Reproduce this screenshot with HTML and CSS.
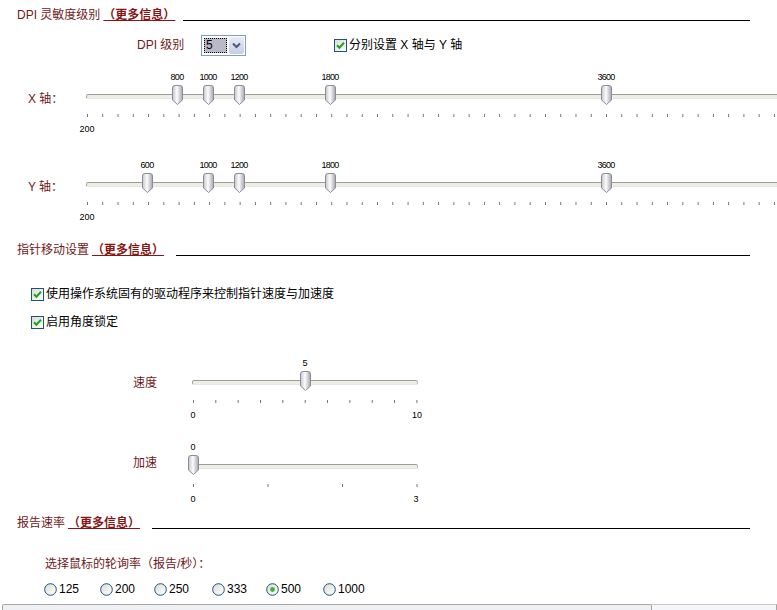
FILE: index.html
```html
<!DOCTYPE html>
<html>
<head>
<meta charset="utf-8">
<title>鼠标设置</title>
<link rel="stylesheet" href="styles.css">
</head>
<body>
<svg class="defs" width="0" height="0" aria-hidden="true">
  <defs>
    <linearGradient id="thumbGrad" x1="0" y1="0" x2="1" y2="0">
      <stop offset="0" stop-color="#c4c4cc"/>
      <stop offset="0.45" stop-color="#fdfdfd"/>
      <stop offset="1" stop-color="#a4a4b0"/>
    </linearGradient>
    <linearGradient id="boxGrad" x1="0" y1="0" x2="1" y2="1">
      <stop offset="0" stop-color="#dcdcd4"/>
      <stop offset="1" stop-color="#ffffff"/>
    </linearGradient>
  </defs>
</svg>
<div class="page">
  <div class="sec-head h-dpi">
    <span class="sec-title">DPI 灵敏度级别</span><span class="more">（更多信息）</span><span class="rule"></span>
  </div>

  <div class="dpi-row">
    <span class="lbl">DPI 级别</span>
    <div class="select">
      <span class="sel-val">5</span>
      <span class="sel-btn"><svg width="9" height="7" viewBox="0 0 9 7"><path d="M1 1.5 L4.5 5 L8 1.5" fill="none" stroke="#4a5a80" stroke-width="2"/></svg></span>
    </div>
    <div class="check dpi-check">
      <svg width="13" height="13" viewBox="0 0 13 13"><rect x="0.5" y="0.5" width="12" height="12" fill="url(#boxGrad)" stroke="#1c5180"/><path d="M3 6.3 L5.4 8.8 L10 3.8" fill="none" stroke="#21a121" stroke-width="2"/></svg>
      <span>分别设置 X 轴与 Y 轴</span>
    </div>
  </div>

  <div class="slider-row axis-row row-x">
    <span class="row-lbl">X 轴：</span>
    <div class="slider wide">
      <span class="val cond" style="left:90px">800</span>
      <span class="val cond" style="left:121px">1000</span>
      <span class="val cond" style="left:152px">1200</span>
      <span class="val cond" style="left:243px">1800</span>
      <span class="val cond" style="left:519px">3600</span>
      <div class="track"></div>
      <span class="thumb" style="left:90px"><svg width="11" height="20" viewBox="0 0 11 20"><path d="M0.5 3 Q0.5 0.5 3 0.5 H8 Q10.5 0.5 10.5 3 V15 L5.5 19.5 L0.5 15 Z" fill="url(#thumbGrad)" stroke="#8c8c96"/></svg></span>
      <span class="thumb" style="left:121px"><svg width="11" height="20" viewBox="0 0 11 20"><path d="M0.5 3 Q0.5 0.5 3 0.5 H8 Q10.5 0.5 10.5 3 V15 L5.5 19.5 L0.5 15 Z" fill="url(#thumbGrad)" stroke="#8c8c96"/></svg></span>
      <span class="thumb" style="left:152px"><svg width="11" height="20" viewBox="0 0 11 20"><path d="M0.5 3 Q0.5 0.5 3 0.5 H8 Q10.5 0.5 10.5 3 V15 L5.5 19.5 L0.5 15 Z" fill="url(#thumbGrad)" stroke="#8c8c96"/></svg></span>
      <span class="thumb" style="left:243px"><svg width="11" height="20" viewBox="0 0 11 20"><path d="M0.5 3 Q0.5 0.5 3 0.5 H8 Q10.5 0.5 10.5 3 V15 L5.5 19.5 L0.5 15 Z" fill="url(#thumbGrad)" stroke="#8c8c96"/></svg></span>
      <span class="thumb" style="left:519px"><svg width="11" height="20" viewBox="0 0 11 20"><path d="M0.5 3 Q0.5 0.5 3 0.5 H8 Q10.5 0.5 10.5 3 V15 L5.5 19.5 L0.5 15 Z" fill="url(#thumbGrad)" stroke="#8c8c96"/></svg></span>
      <div class="ticks ticks-dpi"></div>
      <span class="min" style="left:0px">200</span>
    </div>
  </div>

  <div class="slider-row axis-row row-y">
    <span class="row-lbl">Y 轴：</span>
    <div class="slider wide">
      <span class="val cond" style="left:60px">600</span>
      <span class="val cond" style="left:121px">1000</span>
      <span class="val cond" style="left:152px">1200</span>
      <span class="val cond" style="left:243px">1800</span>
      <span class="val cond" style="left:519px">3600</span>
      <div class="track"></div>
      <span class="thumb" style="left:60px"><svg width="11" height="20" viewBox="0 0 11 20"><path d="M0.5 3 Q0.5 0.5 3 0.5 H8 Q10.5 0.5 10.5 3 V15 L5.5 19.5 L0.5 15 Z" fill="url(#thumbGrad)" stroke="#8c8c96"/></svg></span>
      <span class="thumb" style="left:121px"><svg width="11" height="20" viewBox="0 0 11 20"><path d="M0.5 3 Q0.5 0.5 3 0.5 H8 Q10.5 0.5 10.5 3 V15 L5.5 19.5 L0.5 15 Z" fill="url(#thumbGrad)" stroke="#8c8c96"/></svg></span>
      <span class="thumb" style="left:152px"><svg width="11" height="20" viewBox="0 0 11 20"><path d="M0.5 3 Q0.5 0.5 3 0.5 H8 Q10.5 0.5 10.5 3 V15 L5.5 19.5 L0.5 15 Z" fill="url(#thumbGrad)" stroke="#8c8c96"/></svg></span>
      <span class="thumb" style="left:243px"><svg width="11" height="20" viewBox="0 0 11 20"><path d="M0.5 3 Q0.5 0.5 3 0.5 H8 Q10.5 0.5 10.5 3 V15 L5.5 19.5 L0.5 15 Z" fill="url(#thumbGrad)" stroke="#8c8c96"/></svg></span>
      <span class="thumb" style="left:519px"><svg width="11" height="20" viewBox="0 0 11 20"><path d="M0.5 3 Q0.5 0.5 3 0.5 H8 Q10.5 0.5 10.5 3 V15 L5.5 19.5 L0.5 15 Z" fill="url(#thumbGrad)" stroke="#8c8c96"/></svg></span>
      <div class="ticks ticks-dpi"></div>
      <span class="min" style="left:0px">200</span>
    </div>
  </div>

  <div class="sec-head h-ptr">
    <span class="sec-title">指针移动设置</span><span class="more">（更多信息）</span><span class="rule"></span>
  </div>

  <div class="check check-row cr-1">
    <svg width="13" height="13" viewBox="0 0 13 13"><rect x="0.5" y="0.5" width="12" height="12" fill="url(#boxGrad)" stroke="#1c5180"/><path d="M3 6.3 L5.4 8.8 L10 3.8" fill="none" stroke="#21a121" stroke-width="2"/></svg>
    <span>使用操作系统固有的驱动程序来控制指针速度与加速度</span>
  </div>
  <div class="check check-row cr-2">
    <svg width="13" height="13" viewBox="0 0 13 13"><rect x="0.5" y="0.5" width="12" height="12" fill="url(#boxGrad)" stroke="#1c5180"/><path d="M3 6.3 L5.4 8.8 L10 3.8" fill="none" stroke="#21a121" stroke-width="2"/></svg>
    <span>启用角度锁定</span>
  </div>

  <div class="slider-row speed-row row-speed">
    <span class="row-lbl">速度</span>
    <div class="slider short">
      <span class="val" style="left:112px">5</span>
      <div class="track"></div>
      <span class="thumb" style="left:112px"><svg width="11" height="20" viewBox="0 0 11 20"><path d="M0.5 3 Q0.5 0.5 3 0.5 H8 Q10.5 0.5 10.5 3 V15 L5.5 19.5 L0.5 15 Z" fill="url(#thumbGrad)" stroke="#8c8c96"/></svg></span>
      <div class="ticks ticks-speed"></div>
      <span class="min" style="left:0px">0</span>
      <span class="min" style="left:224px">10</span>
    </div>
  </div>

  <div class="slider-row speed-row row-accel">
    <span class="row-lbl">加速</span>
    <div class="slider short">
      <span class="val" style="left:0px">0</span>
      <div class="track"></div>
      <span class="thumb" style="left:0px"><svg width="11" height="20" viewBox="0 0 11 20"><path d="M0.5 3 Q0.5 0.5 3 0.5 H8 Q10.5 0.5 10.5 3 V15 L5.5 19.5 L0.5 15 Z" fill="url(#thumbGrad)" stroke="#8c8c96"/></svg></span>
      <div class="ticks ticks-accel"></div>
      <span class="min" style="left:0px">0</span>
      <span class="min" style="left:223px">3</span>
    </div>
  </div>

  <div class="sec-head h-rate">
    <span class="sec-title">报告速率</span><span class="more">（更多信息）</span><span class="rule"></span>
  </div>

  <div class="poll-lbl">选择鼠标的轮询率（报告/秒）：</div>

  <div class="radios">
    <div class="radio r1"><svg width="13" height="13" viewBox="0 0 13 13"><circle cx="6.5" cy="6.5" r="5.8" fill="url(#boxGrad)" stroke="#1c5180"/></svg><span>125</span></div>
    <div class="radio r2"><svg width="13" height="13" viewBox="0 0 13 13"><circle cx="6.5" cy="6.5" r="5.8" fill="url(#boxGrad)" stroke="#1c5180"/></svg><span>200</span></div>
    <div class="radio r3"><svg width="13" height="13" viewBox="0 0 13 13"><circle cx="6.5" cy="6.5" r="5.8" fill="url(#boxGrad)" stroke="#1c5180"/></svg><span>250</span></div>
    <div class="radio r4"><svg width="13" height="13" viewBox="0 0 13 13"><circle cx="6.5" cy="6.5" r="5.8" fill="url(#boxGrad)" stroke="#1c5180"/></svg><span>333</span></div>
    <div class="radio r5"><svg width="13" height="13" viewBox="0 0 13 13"><circle cx="6.5" cy="6.5" r="5.8" fill="url(#boxGrad)" stroke="#1c5180"/><circle cx="6.5" cy="6.5" r="2.4" fill="#3cb43c"/></svg><span>500</span></div>
    <div class="radio r6"><svg width="13" height="13" viewBox="0 0 13 13"><circle cx="6.5" cy="6.5" r="5.8" fill="url(#boxGrad)" stroke="#1c5180"/></svg><span>1000</span></div>
  </div>

  <div class="hscroll">
    <div class="hs-thumb"></div>
    <div class="hs-track"></div>
  </div>
</div>
</body>
</html>
```

FILE: styles.css
```css
html, body {
  margin: 0;
  padding: 0;
  background: #ffffff;
  overflow: hidden;
}

body {
  width: 777px;
  height: 610px;
  font-family: "Liberation Sans", "Noto Sans CJK SC", sans-serif;
  font-size: 12px;
  color: #000000;
}

.defs {
  position: absolute;
  width: 0;
  height: 0;
  overflow: hidden;
}

.page {
  display: flex;
  flex-direction: column;
}

/* Section headers */
.sec-head {
  display: flex;
  align-items: flex-end;
  height: 14px;
  line-height: 14px;
  padding-left: 17px;
  padding-right: 27px;
  color: #6e1a1a;
  white-space: nowrap;
}

.sec-title, .more {
  flex: none;
}

.more {
  margin-left: 3px;
  color: #861616;
  font-weight: bold;
  text-decoration: underline;
  text-underline-offset: 1px;
}

.rule {
  flex: 1;
  height: 1px;
  background: #000000;
  margin-left: 12px;
  margin-bottom: 1px;
}

.h-dpi .rule { margin-left: 8px; }

.h-dpi { margin-top: 8px; }
.h-ptr { margin-top: 18px; }
.h-rate { margin-top: 9px; }

/* DPI row */
.dpi-row {
  display: flex;
  align-items: center;
  height: 20px;
  margin-top: 13px;
  padding-left: 137px;
}

.lbl {
  width: 64px;
  flex: none;
  color: #6e1a1a;
  line-height: 14px;
}

.select {
  width: 45px;
  height: 21px;
  flex: none;
  box-sizing: border-box;
  border: 1px solid #7f9db9;
  display: flex;
  align-items: center;
  padding: 1px;
  gap: 2px;
  background: #ffffff;
}

.sel-val {
  width: 23px;
  height: 15px;
  margin-left: 1px;
  box-sizing: border-box;
  border: 1px dotted #000000;
  background: #b9b9ca;
  line-height: 13px;
  font-size: 12px;
  padding-left: 1px;
}

.sel-btn {
  width: 15px;
  height: 17px;
  border-radius: 2px;
  background: linear-gradient(#e8ecf6, #c5cde0);
  display: flex;
  align-items: center;
  justify-content: center;
}

.check {
  display: flex;
  align-items: center;
  gap: 2px;
  line-height: 14px;
  white-space: nowrap;
}

.check svg, .radio svg {
  display: block;
  flex: none;
}

.dpi-check {
  margin-left: 88px;
}

/* Sliders */
.slider-row {
  display: flex;
  height: 65px;
}

.axis-row { padding-left: 28px; }
.speed-row { padding-left: 133px; }

.row-x { margin-top: 17px; }
.row-y { margin-top: 23px; }
.row-speed { margin-top: 29px; }
.row-accel { margin-top: 19px; }

.row-lbl {
  flex: none;
  color: #6e1a1a;
  line-height: 14px;
  white-space: nowrap;
}

.axis-row .row-lbl { width: 59px; padding-top: 20px; }
.row-speed .row-lbl { width: 60px; padding-top: 18px; }
.row-accel .row-lbl { width: 60px; padding-top: 14px; }

.slider {
  position: relative;
  height: 65px;
  flex: none;
}

.slider.wide { width: 700px; }
.slider.short { width: 226px; }

.val, .min {
  position: absolute;
  font-size: 9px;
  line-height: 10px;
  transform: translateX(-50%);
  white-space: nowrap;
  color: #000000;
}

.val { top: 0; }
.min { top: 52px; }

.cond { letter-spacing: -0.7px; }

.track {
  position: absolute;
  left: -1px;
  top: 22px;
  height: 5px;
  box-sizing: border-box;
  border: 1px solid #a3a39c;
  border-color: #9d9d96 #b8b8b0 #e6e6de #a3a39c;
  background: #efeee6;
  border-radius: 2px;
}

.wide .track { width: 710px; }
.short .track { width: 226px; }

.thumb {
  position: absolute;
  top: 13px;
  width: 11px;
  height: 20px;
  margin-left: -5px;
}

.thumb svg { display: block; }

.ticks {
  position: absolute;
  left: 0;
  top: 42px;
  height: 3px;
}

.ticks-dpi {
  width: 700px;
  background: linear-gradient(to right, #707070 1px, transparent 1px) 0 0 / 15.27px 100% repeat-x;
}

.ticks-speed {
  width: 225px;
  background: linear-gradient(to right, #707070 1px, transparent 1px) 0 0 / 22.35px 100% repeat-x;
}

.ticks-accel {
  width: 225px;
  background: linear-gradient(to right, #707070 1px, transparent 1px) 0 0 / 74.5px 100% repeat-x;
}

/* Checkboxes */
.check-row { padding-left: 31px; height: 14px; }
.cr-1 { margin-top: 30px; }
.cr-2 { margin-top: 14px; }

/* Polling rate */
.poll-lbl {
  margin-top: 27px;
  padding-left: 45px;
  height: 14px;
  line-height: 14px;
  color: #6e1a1a;
}

.radios {
  display: flex;
  margin-top: 11px;
  padding-left: 44px;
  height: 14px;
  line-height: 14px;
}

.radio {
  display: flex;
  align-items: center;
  gap: 2px;
  flex: none;
}

.r1 { width: 56px; }
.r2 { width: 54px; }
.r3 { width: 58px; }
.r4 { width: 54px; }
.r5 { width: 57px; }

/* bottom scroll edge */
.hscroll {
  display: flex;
  height: 6px;
  margin-top: 8px;
  padding-left: 2px;
}

.hs-thumb {
  width: 650px;
  flex: none;
  box-sizing: border-box;
  border: 1px solid #a5a5a5;
  border-bottom: 0;
  border-radius: 2px 2px 0 0;
  background: #eef0f4;
}

.hs-track {
  flex: 1;
  border-top: 1px solid #c9c9c9;
  border-right: 1px solid #a5a5a5;
  background: #f5f6f9;
}
```
